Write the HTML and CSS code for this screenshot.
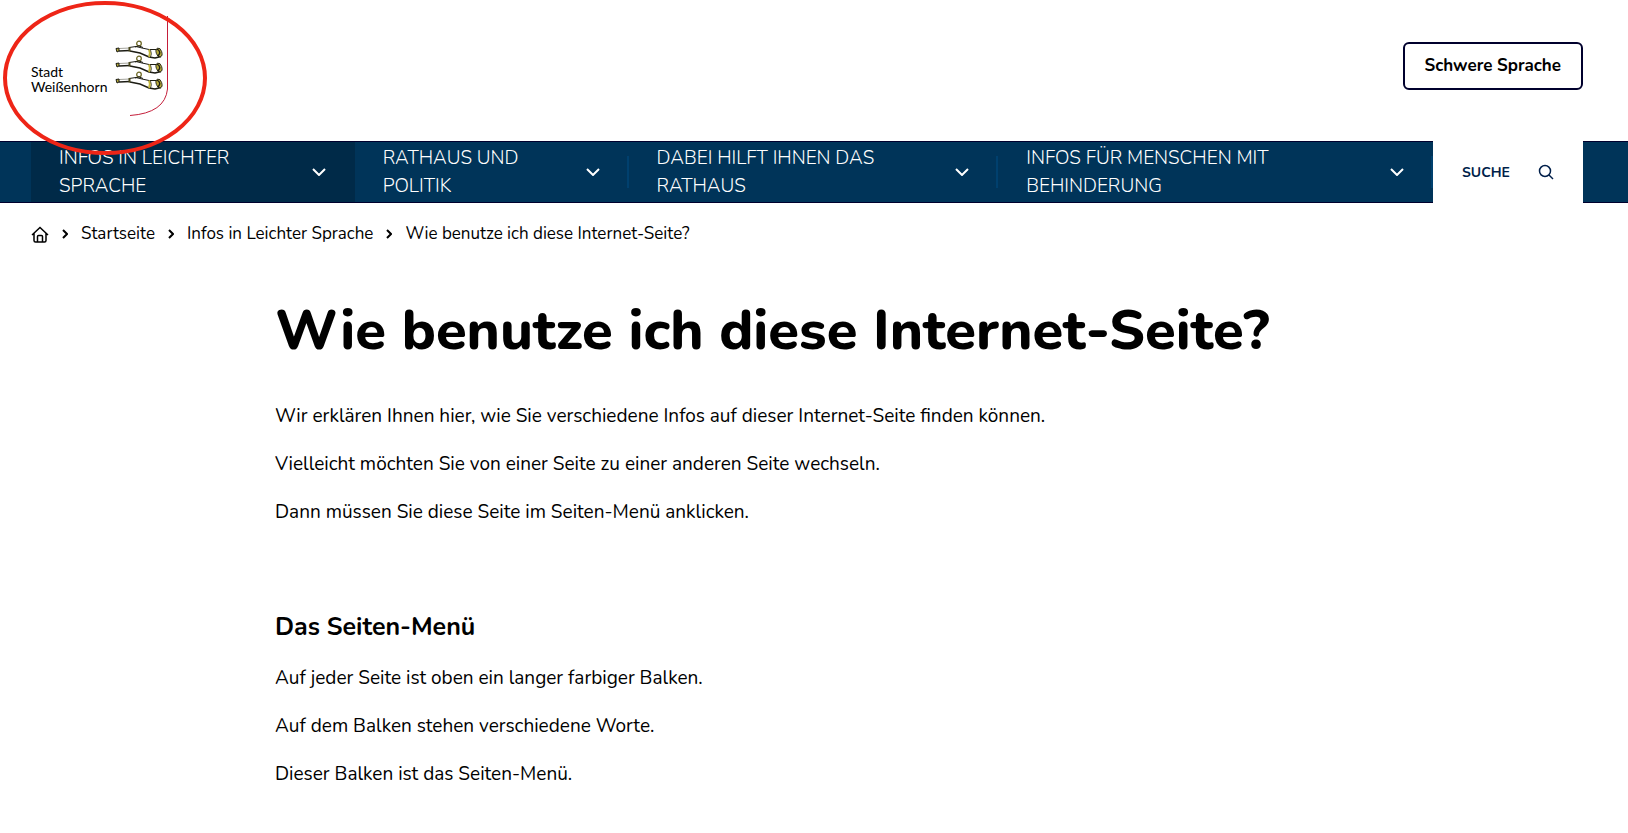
FILE: index.html
```html
<!DOCTYPE html>
<html lang="de">
<head>
    <meta charset="UTF-8">
    <meta name="viewport" content="width=device-width, initial-scale=1.0">
    <title>Wie benutze ich diese Internet-Seite? - Stadt Weißenhorn</title>
    <link rel="stylesheet" href="styles.css">
</head>
<body>

    <svg class="marker" width="212" height="160" viewBox="0 0 212 160" aria-hidden="true">
        <ellipse cx="105" cy="78" rx="100" ry="75" fill="none" stroke="#ee2517" stroke-width="4"/>
    </svg>

    <header class="header">
        <a class="logo" href="#">
            <span class="logo-text">Stadt<br>Weißenhorn</span>
            <svg class="logo-crest" width="54" height="100" viewBox="0 0 54 100" aria-hidden="true">
                <defs>
                    <g id="horn">
                        <path d="M4 8.500 15 8" fill="none" stroke="#8a8a80" stroke-width="0.8"/>
                        <path d="M4 11 15 10.500" fill="none" stroke="#1c1c14" stroke-width="1.300"/>
                        <path d="M14 7.500 21 6 34 9.500 45 9.500 46 16 40 18 34 17 25 13 15 11Z" fill="#fff"/>
                        <path d="M14 7.500 21 6.500 27 8 34 9.500 42 9.500" fill="none" stroke="#1c1c14" stroke-width="1"/>
                        <path d="M15 11 25 13 34 17 40 18 46 16.500" fill="none" stroke="#1c1c14" stroke-width="1.500"/>
                        <path d="M1 8.500 4 8 4 11 2 12Z" fill="#b5aa3c" stroke="#1c1c14"/>
                        <path d="M14.500 7v4.500" stroke="#4a481c" stroke-width="2"/>
                        <path d="M34 9.500q2 4 0 7.500" fill="none" stroke="#c4b83e" stroke-width="2"/>
                        <path d="M35.500 10q2 4 0 7" fill="none" stroke="#1c1c14" stroke-width="0.7"/>
                        <ellipse cx="44" cy="12.500" rx="2.800" ry="4.500" fill="#b5aa3c" stroke="#1c1c14" stroke-width="0.8" transform="rotate(-18 44 12.500)"/>
                        <path d="M42 9q5 3 1 7" fill="none" stroke="#1c1c14" stroke-width="1.400"/>
                        <circle cx="24" cy="3.500" r="2.300" fill="#fff" stroke="#6e6927" stroke-width="1.300"/>
                        <path d="M20 7q4-2.500 8 0.500" fill="none" stroke="#1c1c14"/>
                    </g>
                </defs>
                <use href="#horn" y="24"/>
                <use href="#horn" y="39"/>
                <use href="#horn" y="55"/>
                <path d="M52.500 0V73Q50 97 15 99.500" fill="none" stroke="#c41e3a"/>
            </svg>
        </a>
        <button class="language-button" type="button">Schwere Sprache</button>
    </header>

    <nav class="navbar" aria-label="Hauptmenü">
        <a class="nav-item active" href="#">
            <span>INFOS IN LEICHTER<br>SPRACHE</span>
            <svg class="chevron" viewBox="0 0 14 8"><path d="M1 1l6 6 6-6"/></svg>
        </a>
        <a class="nav-item" href="#">
            <span>RATHAUS UND<br>POLITIK</span>
            <svg class="chevron" viewBox="0 0 14 8"><path d="M1 1l6 6 6-6"/></svg>
        </a>
        <a class="nav-item" href="#">
            <span>DABEI HILFT IHNEN DAS<br>RATHAUS</span>
            <svg class="chevron" viewBox="0 0 14 8"><path d="M1 1l6 6 6-6"/></svg>
        </a>
        <a class="nav-item" href="#">
            <span>INFOS FÜR MENSCHEN MIT<br>BEHINDERUNG</span>
            <svg class="chevron" viewBox="0 0 14 8"><path d="M1 1l6 6 6-6"/></svg>
        </a>
        <button class="search-button" type="button">
            SUCHE
            <svg width="16" height="16" viewBox="0 0 16 16" aria-hidden="true">
                <circle cx="7" cy="7" r="5.500"/>
                <path d="M11 11l4 4"/>
            </svg>
        </button>
    </nav>

    <nav class="breadcrumb" aria-label="Brotkrumen">
        <a class="home" href="#" aria-label="Start">
            <svg width="18" height="17" viewBox="0 0 18 17">
                <path d="M1 9 9 1.500 17 9M3 7.500V14.500Q3 16 4.500 16H13.500Q15 16 15 14.500V7.500M6.500 16V10.500Q6.500 9.500 7.500 9.500H10.500Q11.500 9.500 11.500 10.500V16"/>
            </svg>
        </a>
        <svg class="separator" viewBox="0 0 6 10"><path d="M1 1l4 4-4 4"/></svg>
        <a href="#">Startseite</a>
        <svg class="separator" viewBox="0 0 6 10"><path d="M1 1l4 4-4 4"/></svg>
        <a href="#">Infos in Leichter Sprache</a>
        <svg class="separator" viewBox="0 0 6 10"><path d="M1 1l4 4-4 4"/></svg>
        <span>Wie benutze ich diese Internet-Seite?</span>
    </nav>

    <main class="content">
        <h1>Wie benutze ich diese Internet-Seite?</h1>
        <p>Wir erklären Ihnen hier, wie Sie verschiedene Infos auf dieser Internet-Seite finden können.</p>
        <p>Vielleicht möchten Sie von einer Seite zu einer anderen Seite wechseln.</p>
        <p>Dann müssen Sie diese Seite im Seiten-Menü anklicken.</p>

        <h2>Das Seiten-Menü</h2>
        <p>Auf jeder Seite ist oben ein langer farbiger Balken.</p>
        <p>Auf dem Balken stehen verschiedene Worte.</p>
        <p>Dieser Balken ist das Seiten-Menü.</p>
    </main>

</body>
</html>
```
FILE: styles.css
```css
* {
    box-sizing: border-box;
}

body {
    position: relative;
    margin: 0;
    font-family: Nunito, "Open Sans", sans-serif;
    font-size: 19px;
    line-height: 28px;
    color: #000;
    background-color: #fff;
}

a {
    color: inherit;
    text-decoration: none;
}

svg {
    flex: none;
}

/* red ring around the logo, lies over header and menu */
.marker {
    position: absolute;
    top: 0;
    left: 0;
    pointer-events: none;
}

.header {
    display: flex;
    justify-content: space-between;
    align-items: flex-start;
    padding: 16px 45px 25px 31px;
}

.logo {
    display: flex;
    align-items: flex-start;
    gap: 8px;
}

.logo-text {
    padding-top: 48px;
    font-family: Futura, Lato, sans-serif;
    font-size: 14px;
    line-height: 15px;
}

.language-button {
    margin-top: 26px;
    padding: 8px 20px;
    font-family: inherit;
    font-size: 17px;
    font-weight: 700;
    line-height: 28px;
    color: #000;
    background-color: #fff;
    border: 2px solid #00002d;
    border-radius: 6px;
}

.navbar {
    display: grid;
    grid-template-columns: 324fr 274fr 370fr 435fr 150px;
    height: 62px;
    padding: 0 45px 0 31px;
    background-color: #003459;
    border-top: 1px solid #00002d;
    border-bottom: 1px solid #00002d;
}

.nav-item {
    display: flex;
    justify-content: space-between;
    align-items: center;
    padding: 0 23px 0 28px;
    font-size: 19px;
    font-weight: 300;
    line-height: 28px;
    color: #fff;
    background: linear-gradient(#00406e, #00406e) no-repeat right center / 2px 32px;
}

.nav-item.active {
    padding-right: 29px;
    background: #002a48;
}

.chevron {
    width: 14px;
    height: 8px;
    margin: 0 6px;
    fill: none;
    stroke: #fff;
    stroke-width: 2;
}

.nav-item.active .chevron {
    margin: 0;
}

.search-button {
    display: flex;
    justify-content: space-between;
    align-items: center;
    margin: -1px 0;
    padding: 0 29px;
    font-family: inherit;
    font-size: 14px;
    font-weight: 700;
    color: #001f4a;
    background-color: #fff;
    border: 0;
}

.search-button svg {
    fill: none;
    stroke: #001f4a;
    stroke-width: 1.5;
}

.breadcrumb {
    display: flex;
    align-items: center;
    gap: 13px;
    padding: 17px 31px;
    font-size: 17px;
}

.home {
    display: flex;
}

.home svg,
.separator {
    fill: none;
    stroke: #000;
    stroke-width: 2;
}

.home svg {
    stroke-width: 1.5;
}

.separator {
    width: 6px;
    height: 10px;
}

.content {
    max-width: 1078px;
    margin: 0 auto;
}

h1 {
    margin: 30px 0 35px;
    font-size: 56px;
    font-weight: 800;
    line-height: 72px;
}

h2 {
    margin: 84px 0 20px;
    font-size: 25px;
    font-weight: 700;
    line-height: 34px;
}

p {
    margin: 0 0 20px;
}
```
